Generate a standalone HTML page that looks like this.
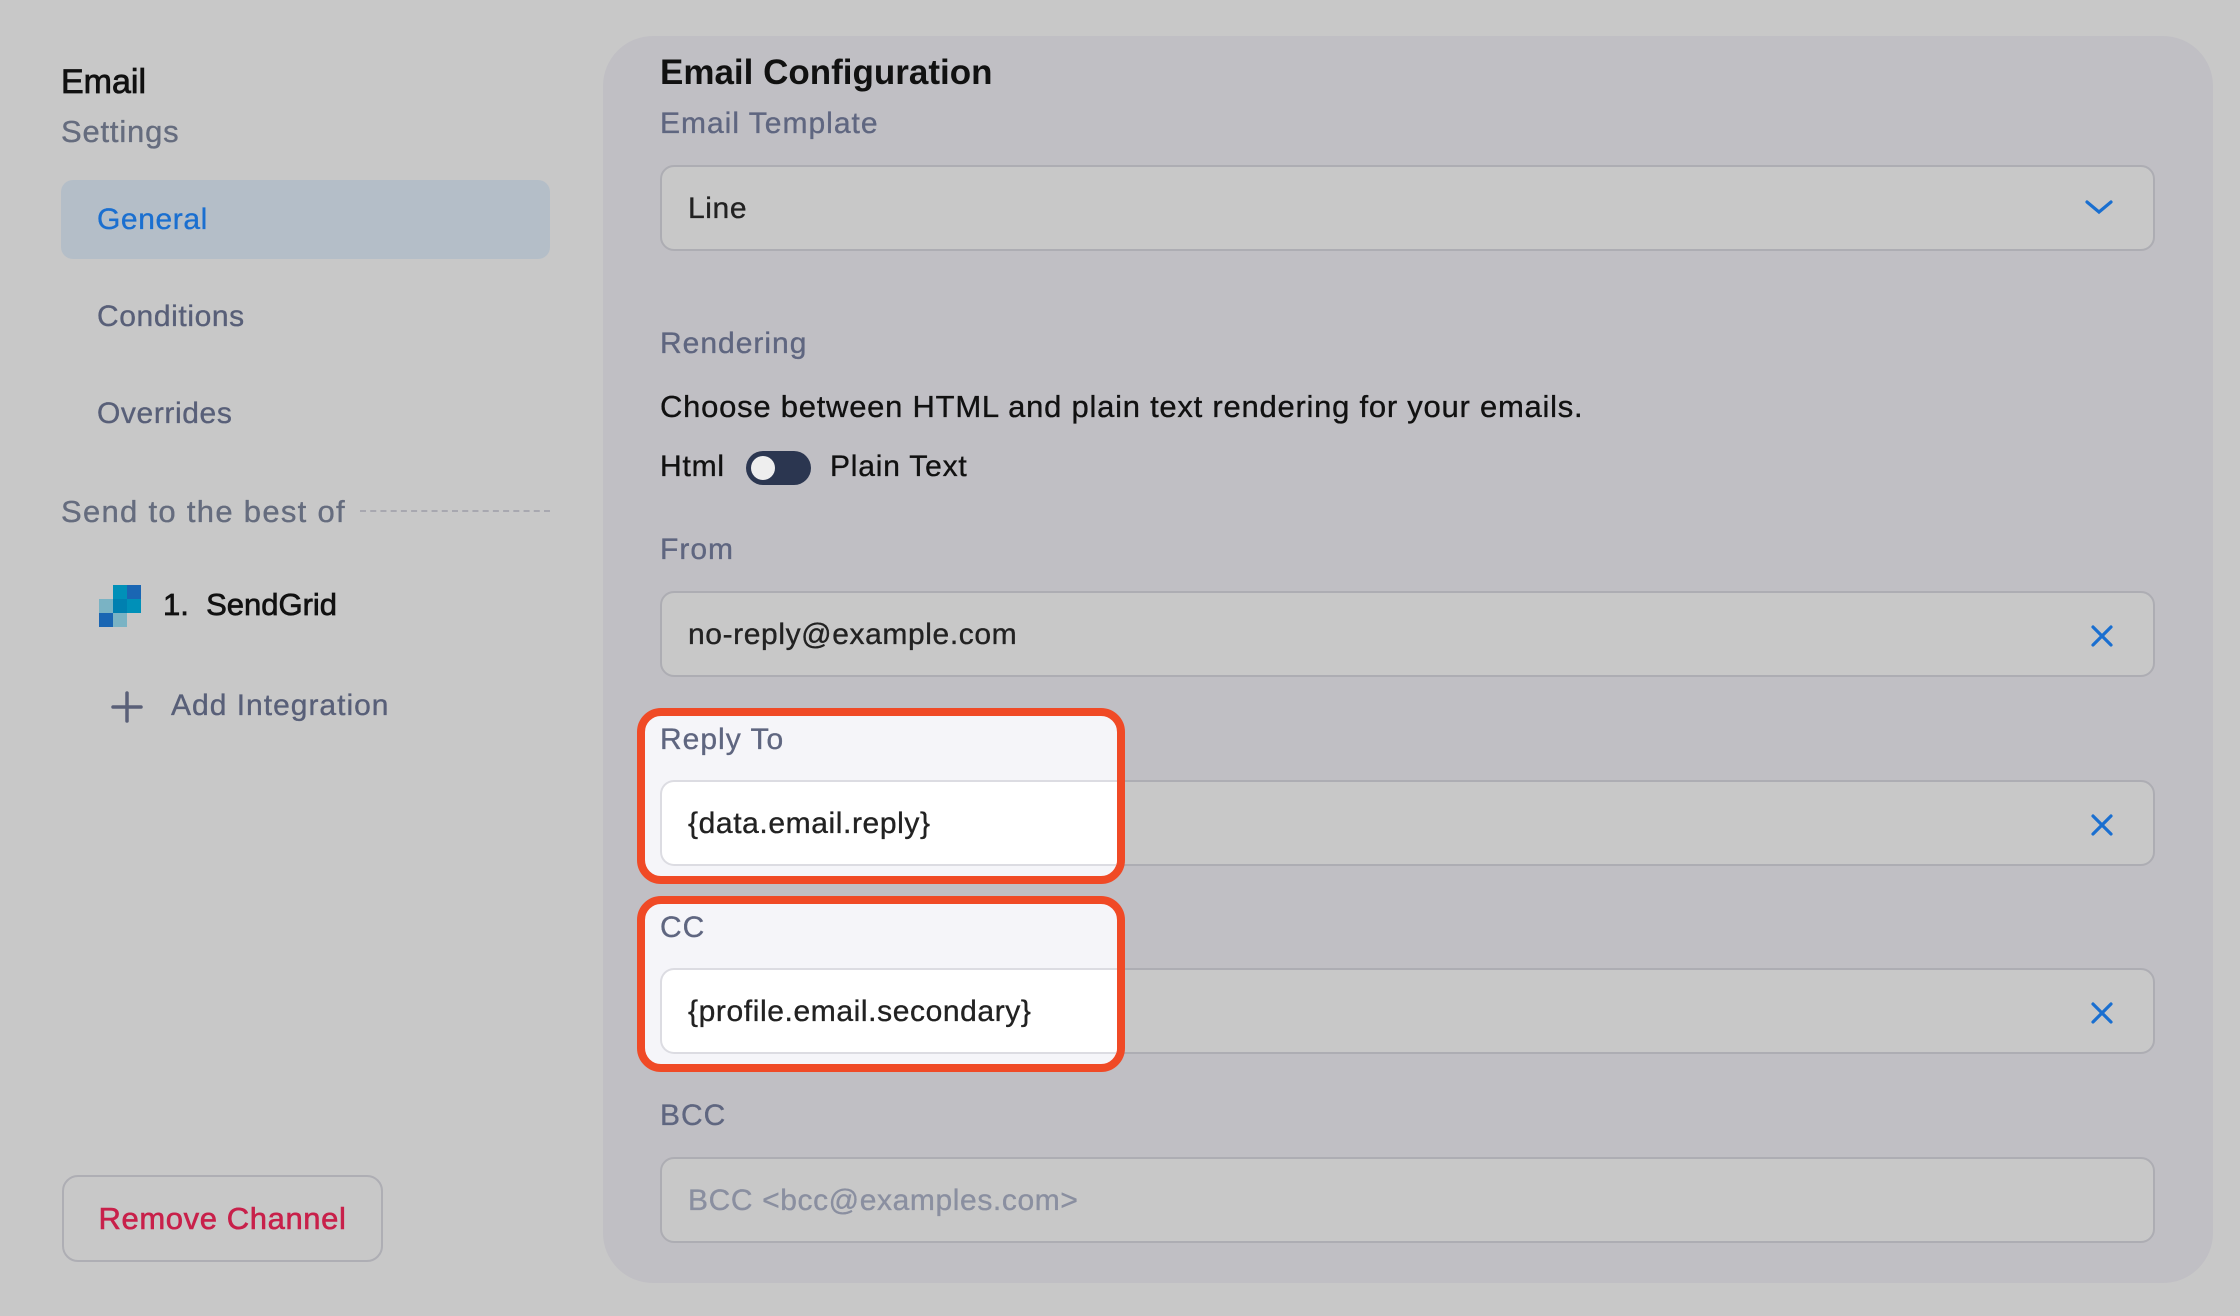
<!DOCTYPE html>
<html><head><meta charset="utf-8"><style>
*{margin:0;padding:0;box-sizing:border-box}
body{width:2240px;height:1316px;background:#c8c8c8;font-family:"Liberation Sans",sans-serif;position:relative;overflow:hidden;-webkit-text-stroke:0.35px currentColor}
.a{position:absolute;white-space:nowrap;line-height:1}
.lbl{color:#5f6680;font-size:30px;letter-spacing:1px}
.sb{font-size:30px;color:#585f78;letter-spacing:.6px}
.inp{position:absolute;left:660px;width:1495px;height:86px;background:#c8c8c8;border:2px solid #adadb3;border-radius:14px}
.itx{position:absolute;left:26px;top:0;line-height:84px;font-size:30px;color:#222;white-space:nowrap;letter-spacing:.6px}
.x{position:absolute;right:40px;top:32px}
.red{position:absolute;left:637px;width:488px;border:8px solid #f04a26;border-radius:24px;background:#f5f5f9;overflow:hidden}
.red .w{position:absolute;left:15px;right:0;height:86px;background:#fff;border:2px solid #dcdce2;border-right:none;border-radius:14px 0 0 14px}
</style></head><body>
<div class="a" style="left:61px;top:65px;font-size:34px;color:#111;-webkit-text-stroke:0.8px #111">Email</div>
<div class="a" style="left:61px;top:116px;font-size:31px;color:#656c7e;letter-spacing:.8px">Settings</div>
<div class="a" style="left:61px;top:180px;width:489px;height:79px;background:#b4bec8;border-radius:12px"></div>
<div class="a sb" style="left:97px;top:205px;color:#1a6fd0">General</div>
<div class="a sb" style="left:97px;top:302px">Conditions</div>
<div class="a sb" style="left:97px;top:399px">Overrides</div>
<div class="a" style="left:61px;top:496px;font-size:31px;color:#656c7e;letter-spacing:1.3px">Send to the best of</div>
<div class="a" style="left:360px;top:510px;width:190px;border-top:2px dashed #a8a8b0"></div>
<div class="a" style="left:99px;top:585px;width:42px;height:42px;-webkit-text-stroke:0">
<div class="a" style="left:14px;top:0;width:14px;height:14px;background:#0090b8"></div>
<div class="a" style="left:28px;top:0;width:14px;height:14px;background:#1a66b3"></div>
<div class="a" style="left:0;top:14px;width:14px;height:14px;background:#7ab3c4"></div>
<div class="a" style="left:14px;top:14px;width:14px;height:14px;background:#0080b0"></div>
<div class="a" style="left:28px;top:14px;width:14px;height:14px;background:#0090b8"></div>
<div class="a" style="left:0;top:28px;width:14px;height:14px;background:#1a66b3"></div>
<div class="a" style="left:14px;top:28px;width:14px;height:14px;background:#7ab3c4"></div>
</div>
<div class="a" style="left:163px;top:589px;font-size:31px;color:#111;-webkit-text-stroke:0.7px #111">1.&nbsp; SendGrid</div>
<svg class="a" style="left:111px;top:691px" width="32" height="32" viewBox="0 0 32 32"><path d="M16 2V30M2 16H30" stroke="#5a6078" stroke-width="3.5" stroke-linecap="round"/></svg>
<div class="a sb" style="left:171px;top:691px;letter-spacing:1px">Add Integration</div>
<div class="a" style="left:62px;top:1175px;width:321px;height:87px;border:2px solid #aeaeb4;border-radius:16px;color:#c8204a;font-size:31px;text-align:center;line-height:83px;letter-spacing:.6px;-webkit-text-stroke:0.6px #c8204a">Remove Channel</div>

<div class="a" style="left:603px;top:36px;width:1610px;height:1247px;background:#c0bfc4;border-radius:50px"></div>
<div class="a" style="left:660px;top:55px;font-size:35px;font-weight:bold;color:#111;-webkit-text-stroke:0">Email Configuration</div>
<div class="a lbl" style="left:660px;top:109px">Email Template</div>
<div class="inp" style="top:165px"><div class="itx">Line</div>
<svg class="x" style="top:31px" width="28" height="18" viewBox="0 0 28 18"><path d="M2 4L14 14L26 4" stroke="#1a6fd0" stroke-width="3.2" fill="none" stroke-linecap="round"/></svg></div>
<div class="a lbl" style="left:660px;top:329px">Rendering</div>
<div class="a" style="left:660px;top:391px;font-size:31px;color:#111;letter-spacing:.75px">Choose between HTML and plain text rendering for your emails.</div>
<div class="a" style="left:660px;top:452px;font-size:30px;color:#111;letter-spacing:.8px">Html</div>
<div class="a" style="left:746px;top:451px;width:65px;height:34px;background:#2b3650;border-radius:17px;-webkit-text-stroke:0"><div class="a" style="left:5px;top:5px;width:24px;height:24px;background:#eee;border-radius:50%"></div></div>
<div class="a" style="left:830px;top:452px;font-size:30px;color:#111;letter-spacing:.8px">Plain Text</div>
<div class="a lbl" style="left:660px;top:535px">From</div>
<div class="inp" style="top:591px"><div class="itx">no-reply@example.com</div>
<svg class="x" width="22" height="22" viewBox="0 0 22 22"><path d="M2 2L20 20M20 2L2 20" stroke="#1a6fd0" stroke-width="3.2" stroke-linecap="round"/></svg></div>
<div class="inp" style="top:780px"><svg class="x" width="22" height="22" viewBox="0 0 22 22"><path d="M2 2L20 20M20 2L2 20" stroke="#1a6fd0" stroke-width="3.2" stroke-linecap="round"/></svg></div>
<div class="inp" style="top:968px"><svg class="x" width="22" height="22" viewBox="0 0 22 22"><path d="M2 2L20 20M20 2L2 20" stroke="#1a6fd0" stroke-width="3.2" stroke-linecap="round"/></svg></div>
<div class="red" style="top:708px;height:176px">
<div class="a lbl" style="left:15px;top:9px">Reply To</div>
<div class="w" style="top:64px"><div class="itx">{data.email.reply}</div></div></div>
<div class="red" style="top:896px;height:176px">
<div class="a lbl" style="left:15px;top:9px">CC</div>
<div class="w" style="top:64px"><div class="itx">{profile.email.secondary}</div></div></div>
<div class="a lbl" style="left:660px;top:1101px">BCC</div>
<div class="inp" style="top:1157px"><div class="itx" style="color:#8a8fa0">BCC &lt;bcc@examples.com&gt;</div></div>
</body></html>
